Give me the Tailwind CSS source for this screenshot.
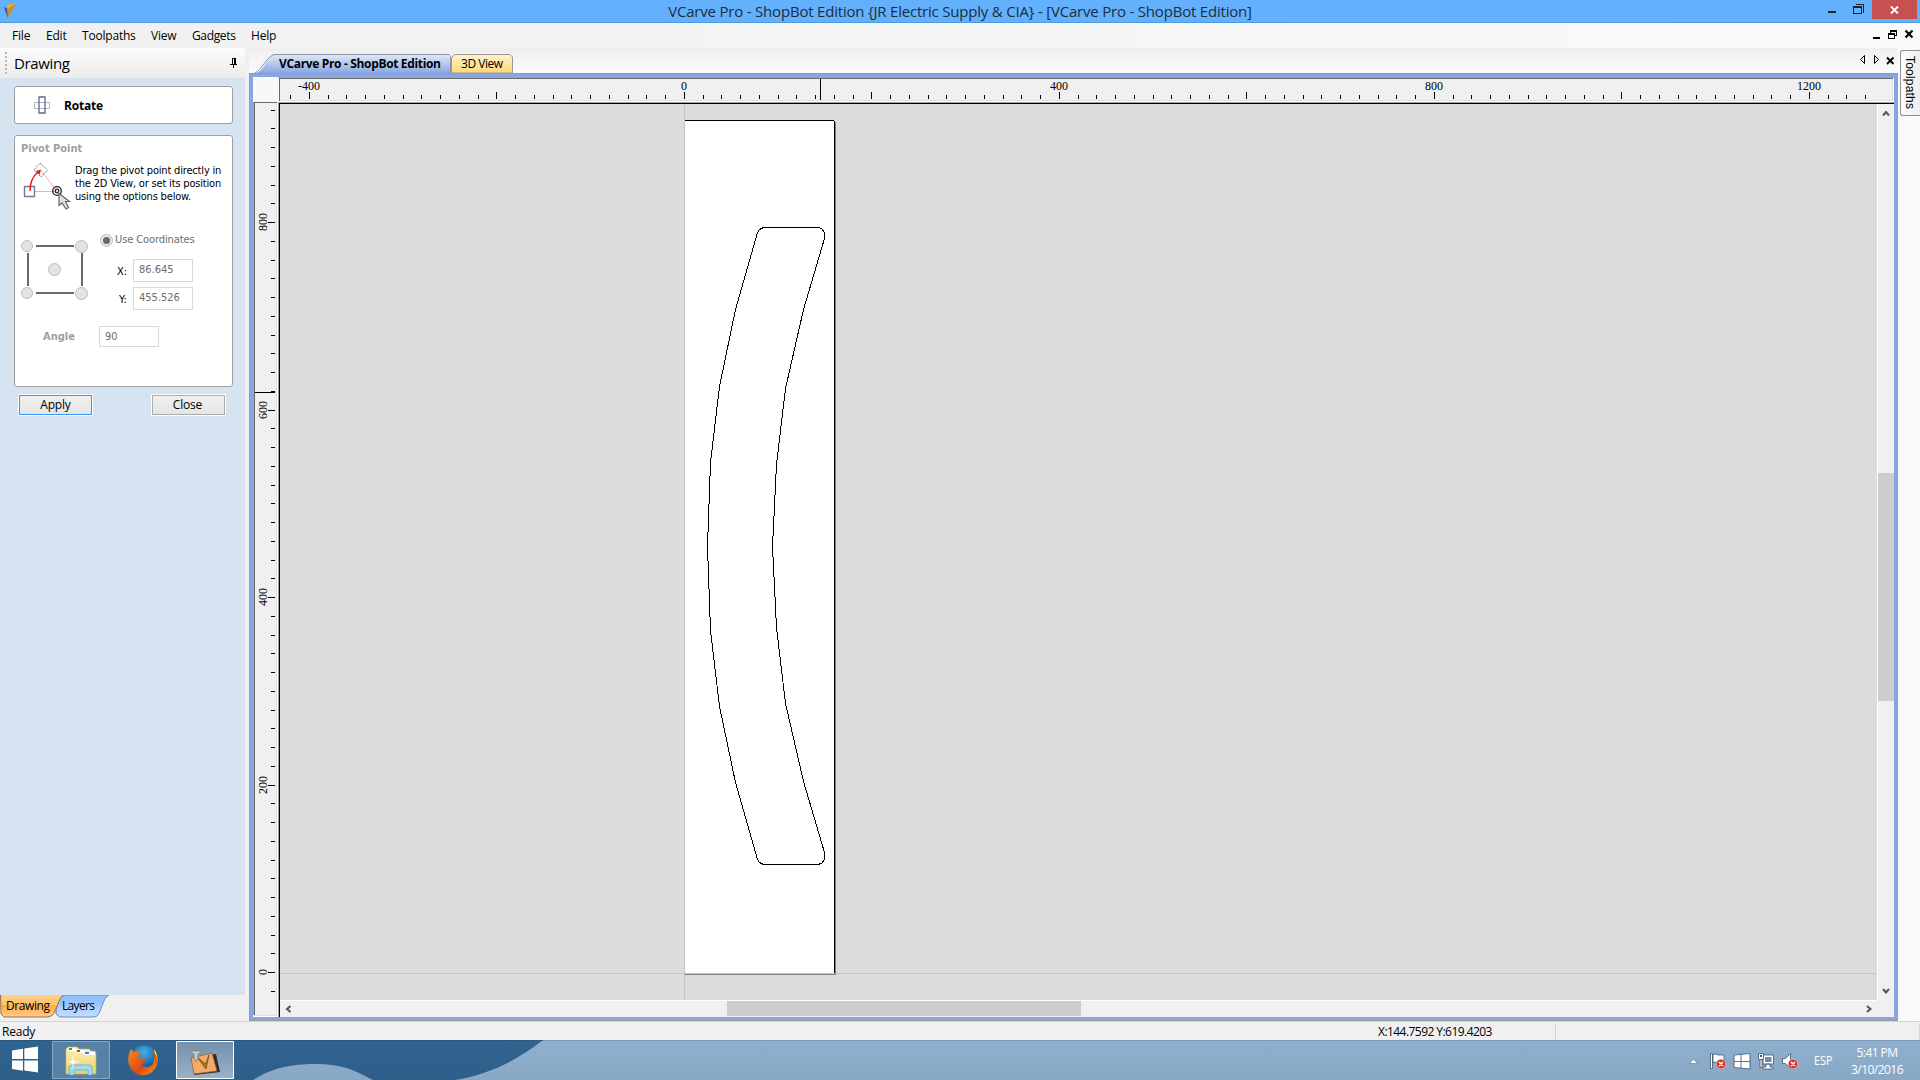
<!DOCTYPE html>
<html lang="en">
<head>
    <meta charset="UTF-8">
    <meta name="viewport" content="width=device-width, initial-scale=1.0">
    <title>VCarve Pro - ShopBot Edition</title>
    <script src="https://cdn.jsdelivr.net/npm/@tailwindcss/browser@4"></script>
</head>
<body class="w-[1920px] h-[1080px] overflow-hidden flex flex-col bg-[#f0f0f0] text-black text-[12px] font-['Open_Sans',sans-serif]">

    <!-- Title bar -->
    <header class="h-[23px] shrink-0 flex bg-[#63b1fc] border-b border-[#4c9be0]">
        <svg class="w-[20px] h-[22px] shrink-0" viewBox="0 0 20 22">
            <path d="M4 7l4 2v9z" fill="#4a4f58"/>
            <path d="M7 5l9-2-8 15-1-8z" fill="#c98d2a"/>
            <path d="M7 5l9-2-8 6z" fill="#e8ae40"/>
        </svg>
        <div class="flex-1 pl-[80px] text-center text-[15px] leading-[22px] tracking-[-0.2px] text-[#1d2d3c] whitespace-nowrap">VCarve Pro - ShopBot Edition {JR Electric Supply &amp; CIA} - [VCarve Pro - ShopBot Edition]</div>
        <div class="flex w-[100px] shrink-0">
            <svg class="w-[52px] h-[22px]" viewBox="1820 0 52 22" shape-rendering="crispEdges">
                <path d="M1828 11h8v2h-8z" fill="#222"/>
                <path d="M1853.500 6.500h8v7h-8zM1853 7.500h9M1855.500 4.500h8v8" fill="none" stroke="#222"/>
            </svg>
            <div class="w-[45px] h-[19px] bg-[#c75050] flex items-center justify-center">
                <svg class="w-[9px] h-[8px]" viewBox="0 0 9 8"><path d="M1 .5l7 7M8 .5l-7 7" stroke="#fff" stroke-width="1.800"/></svg>
            </div>
        </div>
    </header>

    <!-- Menu bar -->
    <nav class="h-[25px] shrink-0 flex items-center bg-linear-to-r from-[#f0f0f0] to-[#fafafa] pl-[12px] tracking-[-0.2px] leading-[25px]">
        <span class="w-[34px]">File</span>
        <span class="w-[36px]">Edit</span>
        <span class="w-[69px]">Toolpaths</span>
        <span class="w-[41px]">View</span>
        <span class="w-[59px] tracking-[-0.35px]">Gadgets</span>
        <span>Help</span>
        <svg class="ml-auto w-[50px] h-[25px]" viewBox="1870 23 50 25" shape-rendering="crispEdges">
            <path d="M1873 37h7v2h-7z"/>
            <path d="M1888.500 33.500h6v5h-6zM1888 34.500h7M1890.500 33v-2.500h6v5h-2M1890 31.500h7" fill="none" stroke="#000"/>
            <path d="M1905.500 30.500l7 7M1912.500 30.500l-7 7" stroke="#000" stroke-width="2.200" shape-rendering="auto"/>
        </svg>
    </nav>

    <main class="h-[973px] shrink-0 flex">
        <!-- Drawing panel -->
        <aside class="w-[245px] shrink-0 flex flex-col">
            <div class="h-[30px] shrink-0 flex items-center bg-linear-to-b from-[#fcfcfc] to-[#ececec] pl-[5px]">
                <svg class="w-[2px] h-[22px]" viewBox="0 0 2 22"><path d="M1 0v22" stroke="#b8b8b8" stroke-width="2" stroke-dasharray="2 2"/></svg>
                <span class="ml-[7px] text-[15px] tracking-[-0.35px]">Drawing</span>
                <svg class="ml-auto mr-[7px] w-[8px] h-[10px]" viewBox="0 0 8 10" shape-rendering="crispEdges">
                    <path d="M2 0h4v6H2zM0 6h7v1H0zM3 7h1v3H3z"/><path d="M3 1h1v5H3z" fill="#fff"/>
                </svg>
            </div>
            <div class="h-[917px] shrink-0 bg-[#d6e4f1] pl-[14px] pt-[8px]">
                <div class="w-[219px] h-[38px] rounded-[3px] border border-[#a0a0a0] bg-white flex items-center pt-[2px]">
                    <svg class="ml-[18px] w-[18px] h-[20px]" viewBox="0 0 18 20" fill="none">
                        <path d="M1.500 6.500h15v6h-15z" stroke="#b4b4b4"/>
                        <path d="M6 1h6v16H6z" stroke="#586a90" stroke-width="1.300"/>
                    </svg>
                    <span class="ml-[13px] font-bold tracking-[-0.2px]">Rotate</span>
                </div>
                <div class="mt-[11px] w-[219px] h-[252px] rounded-[3px] border border-[#a0a0a0] bg-white text-[11px] font-['DejaVu_Sans_Condensed','DejaVu_Sans',sans-serif]">
                    <div class="pl-[6px] pt-[5px] leading-[15px] font-bold text-[#a0a0a0]">Pivot Point</div>
                    <div class="flex h-[66px]">
                        <svg class="w-[60px] h-[56px] shrink-0" viewBox="15 156 60 56" fill="none">
                            <path d="M30 191.500h27L41 170" stroke="#f9b0b0"/>
                            <path d="M24.500 186.500h10v10h-10z" fill="#fff" stroke="#6d7f98" stroke-width="1.400"/>
                            <path d="M40 163l7.500 7-6.500 7-7-7z" stroke="#75839a" stroke-dasharray="2 1"/>
                            <path d="M30 191c0-10 3-15 8-19" stroke="#f01818" stroke-width="1.500"/>
                            <path d="M41 169.500l-1.500 5.500-3.500-4z" fill="#f01818"/>
                            <circle cx="57" cy="191" r="4.300" stroke="#222" stroke-width="1.300"/>
                            <circle cx="57" cy="191" r="1.800" stroke="#222" stroke-width="1.200"/>
                            <path d="M59 193.500v12l3-2.500 4 6 2.500-1.500-3-6h4z" fill="#e0e0e0" stroke="#666" stroke-width="1.200"/>
                        </svg>
                        <p class="pt-[8px] leading-[13px] tracking-[-0.18px] whitespace-nowrap">Drag the pivot point directly in<br>the 2D View, or set its position<br>using the options below.</p>
                    </div>
                    <div class="flex h-[90px] pt-[9px]">
                        <svg class="w-[76px] h-[72px] shrink-0" viewBox="15 231 76 72">
                            <path d="M36 246h38M36 293h38M28 253v33M82 253v33" stroke="#696969" stroke-width="2"/>
                            <g fill="#e3e3e3" stroke="#bcbcbc">
                                <circle cx="27" cy="246" r="5.500"/><circle cx="81.500" cy="246.500" r="6"/><circle cx="54.500" cy="269.500" r="6"/>
                                <circle cx="27" cy="293" r="5.500"/><circle cx="81.500" cy="293.500" r="6"/>
                            </g>
                        </svg>
                        <div class="flex flex-col pl-[9px] text-[#6d6d6d]">
                            <div class="flex items-center h-[18px] tracking-[-0.1px]">
                                <span class="w-[13px] h-[13px] rounded-full border border-[#bcbcbc] bg-[#e6e6e6] flex items-center justify-center"><span class="w-[7px] h-[7px] rounded-full bg-[#696969]"></span></span>
                                <span class="ml-[2px]">Use Coordinates</span>
                            </div>
                            <div class="flex mt-[10px]">
                                <span class="w-[33px] pl-[17px] pt-[5px] text-black leading-[15px]">X:</span>
                                <div class="w-[60px] h-[23px] border border-[#d9d9d9] pl-[5px] leading-[19px]">86.645</div>
                            </div>
                            <div class="flex mt-[5px]">
                                <span class="w-[33px] pl-[19px] pt-[5px] text-black leading-[15px]">Y:</span>
                                <div class="w-[60px] h-[23px] border border-[#d9d9d9] pl-[5px] leading-[19px]">455.526</div>
                            </div>
                        </div>
                    </div>
                    <div class="flex mt-[14px]">
                        <span class="w-[84px] pl-[28px] font-bold text-[#a0a0a0] leading-[21px]">Angle</span>
                        <div class="w-[60px] h-[21px] border border-[#d9d9d9] pl-[5px] leading-[19px] text-[#6d6d6d]">90</div>
                    </div>
                </div>
                <div class="mt-[7px] flex pl-[4px] gap-[58px] text-center tracking-[-0.2px]">
                    <button class="w-[75px] h-[22px] border border-white bg-white"><span class="block h-[20px] border border-[#3399ff] bg-linear-to-b from-[#f0f0f0] to-[#e5e5e5] leading-[17px]">Apply</span></button>
                    <button class="w-[75px] h-[22px] border border-white bg-white"><span class="block h-[20px] border border-[#acacac] bg-linear-to-b from-[#f0f0f0] to-[#e5e5e5] pr-[2px] leading-[17px]">Close</span></button>
                </div>
            </div>
            <!-- bottom tabs -->
            <svg class="w-[245px] h-[26px] shrink-0" viewBox="0 995 245 26" font-size="12">
                <defs>
                    <linearGradient id="orange" x1="0" y1="0" x2="0" y2="1"><stop offset="0" stop-color="#ffd28c"/><stop offset=".45" stop-color="#ffc06a"/><stop offset=".5" stop-color="#ffab45"/><stop offset="1" stop-color="#ffcb92"/></linearGradient>
                    <linearGradient id="sky" x1="0" y1="0" x2="0" y2="1"><stop offset="0" stop-color="#8fbdfb"/><stop offset=".5" stop-color="#9cc6fd"/><stop offset=".55" stop-color="#abd0ff"/><stop offset="1" stop-color="#c4dcff"/></linearGradient>
                </defs>
                <path d="M57 995h52c-6 2-8 18-12 21l-3 1H60l-4-3z" fill="url(#sky)" stroke="#5f8fce"/>
                <path d="M.5 994.500H64c-6 3-7 17-12 21l-4 1.500H4l-3-3z" fill="url(#orange)" stroke="#94713f"/>
                <text x="6" y="1010" textLength="44">Drawing</text>
                <text x="62" y="1010" textLength="33">Layers</text>
            </svg>
        </aside>

        <!-- Document area -->
        <section class="ml-[4px] w-[1649px] shrink-0 flex flex-col">
            <svg class="w-[1649px] h-[25px] shrink-0" viewBox="249 48 1649 25" font-size="12">
                <defs>
                    <linearGradient id="strip" x1="0" y1="0" x2="0" y2="1"><stop offset="0" stop-color="#eeeeee"/><stop offset="1" stop-color="#fcfcfc"/></linearGradient>
                    <linearGradient id="active" x1="0" y1="0" x2="0" y2="1"><stop offset="0" stop-color="#dfe8fa"/><stop offset="1" stop-color="#8ba8e2"/></linearGradient>
                    <linearGradient id="gold" x1="0" y1="0" x2="0" y2="1"><stop offset="0" stop-color="#fff2cf"/><stop offset="1" stop-color="#ffd873"/></linearGradient>
                </defs>
                <path d="M249 48h1649v25H249z" fill="url(#strip)"/>
                <path d="M256 73c8-2 12-18 20-18.500h172.500l1.500 2V73z" fill="url(#active)"/>
                <path d="M254 73.500c8-3 13-18.500 21-19h174l1.500 2V73" fill="none" stroke="#8f949e"/>
                <path d="M451.500 73V58l3-3.500H510l2.500 2.500v16z" fill="url(#gold)" stroke="#999"/>
                <text x="279" y="68" font-weight="700" textLength="162">VCarve Pro - ShopBot Edition</text>
                <text x="461" y="68" textLength="42">3D View</text>
                <path d="M1864.500 55.500v8l-4-4zM1874.500 55.500v8l4-4z" fill="none" stroke="#000"/>
                <path d="M1887 57.500l6.500 6.500M1893.500 57.500l-6.500 6.500" stroke="#000" stroke-width="1.800"/>
            </svg>
            <div class="h-[948px] border border-[#9b9b9f]">
                <div class="h-[946px] border-3 border-[#8aa6e2] bg-white grid grid-cols-[25px_1616px] grid-rows-[25px_915px]">
                    <div class="bg-[#f8f8f8]"></div>
                    <svg id="rulerX" class="w-[1616px] h-[25px] text-[12px] font-['Liberation_Serif',serif]" viewBox="278 77 1616 25" shape-rendering="crispEdges">
                        <path d="M278 77h1616v1H278z" fill="#8aa6e2"/>
                        <path d="M279 78h1614v23H279z" fill="#f0f0f0"/>
                        <path d="M279 100h1614v1H279zM1892 79h1v22h-1z" fill="#e0e0e0"/>
                        <path d="M279 78h1614v1H280v22h-1z" fill="#696969"/>
                        <path d="M820 79h1v21h-1z"/>
                    </svg>
                    <svg id="rulerY" class="w-[25px] h-[915px] text-[12px] font-['Liberation_Serif',serif]" viewBox="253 102 25 915" shape-rendering="crispEdges">
                        <path d="M253 102h1v913h-1z" fill="#8aa6e2"/>
                        <path d="M254 102h23v914h-23z" fill="#f0f0f0"/>
                        <path d="M276 103h1v913h-23v-1h22z" fill="#e0e0e0"/>
                        <path d="M254 102h23v1h-22v912h-1z" fill="#696969"/>
                        <path d="M255 392h20v1h-20z"/>
                    </svg>
                    <div class="border-l border-t border-[#a0a0a0]">
                        <div class="h-[914px] border-l border-t border-black grid grid-cols-[1597px_17px] grid-rows-[896px_17px] bg-[#f0f0f0]">
                            <svg class="w-[1597px] h-[896px] bg-[#dcdcdc]" viewBox="280 104 1597 896" shape-rendering="crispEdges">
                                <path d="M685 121h149v852H685z" fill="#fff"/>
                                <path d="M684 104h1v896h-1zM280 973h1597v1H280z" fill="#c6c6c6"/>
                                <path d="M835 122h1v853H685v-1h150z" fill="#808080"/>
                                <path d="M685 120h149v1h1v852h-1V121H685z"/>
                                <path d="M763.500 227.500H818.500L821.500 228.500L824.500 232.500V238.500L803.500 309.500L785.500 388.500L776.500 464.500L772.500 546.500L776.500 627.500L785.500 703.500L803.500 781.500L824.500 852.500V859.500L821.500 863.500L817.500 864.500H763.500L759.500 862.500L757.500 859.500L735.500 782.500L719.500 706.500L710.500 630.500L707.500 546.500L710.500 462.500L719.500 386.500L735.500 309.500L757.500 232.500L759.500 229.500Z" fill="none" stroke="#000"/>
                            </svg>
                            <div class="border-l border-white flex flex-col items-center pt-[6px]">
                                <svg class="w-[8px] h-[7px]" viewBox="0 0 8 7"><path d="M1 5.500l3-3.500 3 3.500" fill="none" stroke="#555" stroke-width="2"/></svg>
                                <div class="mt-[356px] w-[16px] h-[228px] bg-[#cdcdcd]"></div>
                                <svg class="mt-[286px] w-[8px] h-[7px]" viewBox="0 0 8 7"><path d="M1 2l3 3.500 3-3.500" fill="none" stroke="#555" stroke-width="2"/></svg>
                            </div>
                            <div class="border-t border-white flex items-center pl-[5px] pb-px">
                                <svg class="w-[7px] h-[8px]" viewBox="0 0 7 8"><path d="M5.500 1L2 4l3.500 3" fill="none" stroke="#555" stroke-width="2"/></svg>
                                <div class="ml-[435px] w-[354px] h-[15px] bg-[#cdcdcd]"></div>
                                <svg class="ml-[784px] w-[7px] h-[8px]" viewBox="0 0 7 8"><path d="M2 1l3.500 3L2 7" fill="none" stroke="#555" stroke-width="2"/></svg>
                            </div>
                            <div></div>
                        </div>
                    </div>
                </div>
            </div>
        </section>

        <!-- Collapsed toolpaths panel -->
        <aside class="w-[22px] shrink-0 bg-[#fafafa] pt-[2px] pl-[2px]">
            <div class="h-[66px] rounded-l-[3px] border border-r-0 border-[#8f8f8f] bg-linear-to-r from-[#fdfdfd] to-[#eeeeee] pt-[5px] pl-[2px]">
                <svg class="w-[14px] h-[54px]" viewBox="0 0 14 54" font-size="12" font-family="Liberation Sans, sans-serif"><text transform="translate(3 0) rotate(90)" textLength="53">Toolpaths</text></svg>
            </div>
        </aside>
    </main>

    <!-- Status bar -->
    <div class="h-[19px] shrink-0 border-t border-[#d4d4d4] flex leading-[19px] pl-[2px] tracking-[-0.2px]">
        <span class="w-[1376px]">Ready</span>
        <span class="w-[178px] h-[17px] mt-px leading-[17px] tracking-[-0.55px] border-r border-[#d4d4d4]">X:144.7592 Y:619.4203</span>
        <span class="ml-auto h-[17px] mt-px border-r border-[#d4d4d4]"></span>
    </div>

    <!-- Taskbar -->
    <footer class="h-[40px] shrink-0 relative">
        <svg class="block w-[1920px] h-[40px]" viewBox="0 1040 1920 40">
            <defs>
                <linearGradient id="pale" x1="0" y1="0" x2="0" y2="1"><stop offset="0" stop-color="#8fb0cf"/><stop offset="1" stop-color="#88a7c4"/></linearGradient>
                <linearGradient id="deep" x1="0" y1="0" x2="0" y2="1"><stop offset="0" stop-color="#30638f"/><stop offset="1" stop-color="#2d5f89"/></linearGradient>
                <linearGradient id="folder" x1="0" y1="0" x2="0" y2="1"><stop offset="0" stop-color="#fdf2b4"/><stop offset="1" stop-color="#e9cf73"/></linearGradient>
                <radialGradient id="globe" cx=".5" cy=".25" r=".7"><stop offset="0" stop-color="#3fb4ee"/><stop offset="1" stop-color="#12407f"/></radialGradient>
                <linearGradient id="fox" x1="0" y1="0" x2="1" y2="1"><stop offset="0" stop-color="#f08a24"/><stop offset=".6" stop-color="#dd4a17"/><stop offset="1" stop-color="#f6a21c"/></linearGradient>
                <linearGradient id="lit" x1="0" y1="0" x2="0" y2="1"><stop offset="0" stop-color="#7490ad"/><stop offset="1" stop-color="#9ab2c8"/></linearGradient>
            </defs>
            <path d="M0 1040h1920v40H0z" fill="url(#pale)"/>
            <path d="M0 1040h543c-24 19-52 34-88 40h-82c-16-8-27-16-59-16s-50 9-61 16H0z" fill="url(#deep)"/>
            <path d="M543 1040.500h1377" stroke="#7f9dba"/>
            <path d="M0 1040.500h543" stroke="#2a5880"/>
            <!-- start -->
            <path d="M12 1050.500l11-1.700v10.200H12zM24.300 1048.600l13.700-2v12.400H24.300zM12 1060.500h11v10.200l-11-1.700zM24.300 1060.500H38v12l-13.700-2z" fill="#fff"/>
            <!-- explorer -->
            <path d="M52.500 1041.500h57v37h-57z" fill="#5781a7" stroke="#8aa7c1"/>
            <path d="M66 1049l2-2h9l2 2h10l2 2h4l1 3v20H66z" fill="url(#folder)" stroke="#cdb567" stroke-width=".6"/>
            <path d="M69 1048h7v3h-7zM77 1050h8v3h-8zM84 1052h11v3H84z" fill="#fff"/>
            <path d="M69 1048h3v2h-3z" fill="#19b335"/><path d="M77 1050h3v2h-3z" fill="#d43a22"/><path d="M85 1052h4v2h-4z" fill="#2b87df"/>
            <path d="M69 1075v-7q0-3 3-3h17q3 0 3 3v7h-4v-5H74v5z" fill="#9ddcf4" stroke="#56aed6" stroke-width=".8"/>
            <path d="M73 1056v12M67 1062h12" stroke="#fff" stroke-width=".8"/>
            <circle cx="73" cy="1062" r="2" fill="#fff"/>
            <!-- firefox -->
            <circle cx="144" cy="1059" r="13.500" fill="url(#globe)"/>
            <path d="M154 1049c5 6 5 17-2 22l-5 1c6-5 9-12 7-23z" fill="#fbd743"/>
            <path d="M131 1049l3 3c2-1 4-2 7 0-2 2-3 4-2 6 2 1 5 0 7 1 0 3-4 4-4 6 4 4 10 2 12-3 1-4 0-9-2-12 7 6 7 16 0 22-8 6-18 3-22-5-3-6-2-13 1-18z" fill="url(#fox)"/>
            <!-- vcarve -->
            <path d="M176.500 1041.500h57v37h-57z" fill="url(#lit)" stroke="#fff"/>
            <path d="M193 1057l23-3 4 18-26 3z" fill="#302c2a"/>
            <path d="M191 1058l21-5 5 18-23 3z" fill="#f2ab6c" stroke="#8c5a30" stroke-width=".7"/>
            <path d="M197 1057l9 12 3-14-3.500 9z" fill="#b27a12" stroke="#735010" stroke-width=".8"/>
            <path d="M194 1046h4v5h-4z" fill="#8b9198"/>
            <path d="M189 1051h14l-5 3v4l-2 4-2-4v-4z" fill="#c4c8cd" stroke="#777d84" stroke-width=".7"/>
            <!-- tray -->
            <path d="M1689.500 1063.500l4-4.500 4 4.500z" fill="#fff" stroke="#5a7590" stroke-width=".6"/>
            <g fill="#fff" stroke="#40566c" stroke-width=".8">
                <path d="M1710.500 1053.500h2v15h-2zM1713 1054.500c3-1.500 4 1 7 .5 2 0 3 0 4 .5v7c-4 1-6-1-11 0z"/>
                <path d="M1734 1055l16-1.500v15.500l-16-1.500z"/>
                <path d="M1763 1055h10.500v9H1763zM1766 1064h4v3h3v2h-10v-2h3z"/>
                <path d="M1758.500 1053.500h5v6h-5zM1760 1059.500h2v8h-2z"/>
                <path d="M1782.500 1058.500h3l5-5v15l-5-5h-3z"/>
            </g>
            <path d="M1741 1054v15M1734 1061.500h16" stroke="#5a7590"/>
            <path d="M1765 1057h6.500v5H1765z" fill="#6d8cab"/>
            <path d="M1760 1055h2v2h-2z" fill="#40566c"/>
            <g fill="#d9342b" stroke="#f0d0cd" stroke-width=".6">
                <circle cx="1721" cy="1064" r="4.800"/><circle cx="1793" cy="1064" r="4.800"/>
            </g>
            <path d="M1719 1062l4 4M1723 1062l-4 4M1791 1062l4 4M1795 1062l-4 4" stroke="#fff" stroke-width="1.500"/>
            <g fill="#fff" font-size="12">
                <text x="1814" y="1065" textLength="18.500" lengthAdjust="spacingAndGlyphs">ESP</text>
                <text x="1856.500" y="1057" textLength="41.500">5:41 PM</text>
                <text x="1851" y="1074" textLength="52.500">3/10/2016</text>
            </g>
        </svg>
    </footer>

    <script>
        const PITCH = 18.75; // px per 20 units
        const NS = 'http://www.w3.org/2000/svg';

        function add(parent, name, attrs, text) {
            const el = document.createElementNS(NS, name);
            for (const key in attrs) el.setAttribute(key, attrs[key]);
            if (text !== undefined) el.textContent = text;
            parent.appendChild(el);
        }

        const rulerX = document.getElementById('rulerX');
        for (let i = -21; i <= 63; i++) {
            const x = Math.floor(684 + i * PITCH + 0.25);
            const big = i % 10 === 0;
            add(rulerX, 'rect', { x: x, y: big ? 92 : 95, width: 1, height: big ? 7 : 4 });
            if (i % 20 === 0) add(rulerX, 'text', { x: x, y: 90, 'text-anchor': 'middle' }, i * 20);
        }

        const rulerY = document.getElementById('rulerY');
        for (let i = -1; i <= 46; i++) {
            const y = Math.floor(972 - i * PITCH + 0.5);
            const big = i % 10 === 0;
            add(rulerY, 'rect', { x: big ? 268 : 271, y: y, width: big ? 7 : 4, height: 1 });
            if (big) add(rulerY, 'text', { transform: `translate(267 ${y}) rotate(-90)`, 'text-anchor': 'middle' }, i * 20);
        }
    </script>
</body>
</html>
